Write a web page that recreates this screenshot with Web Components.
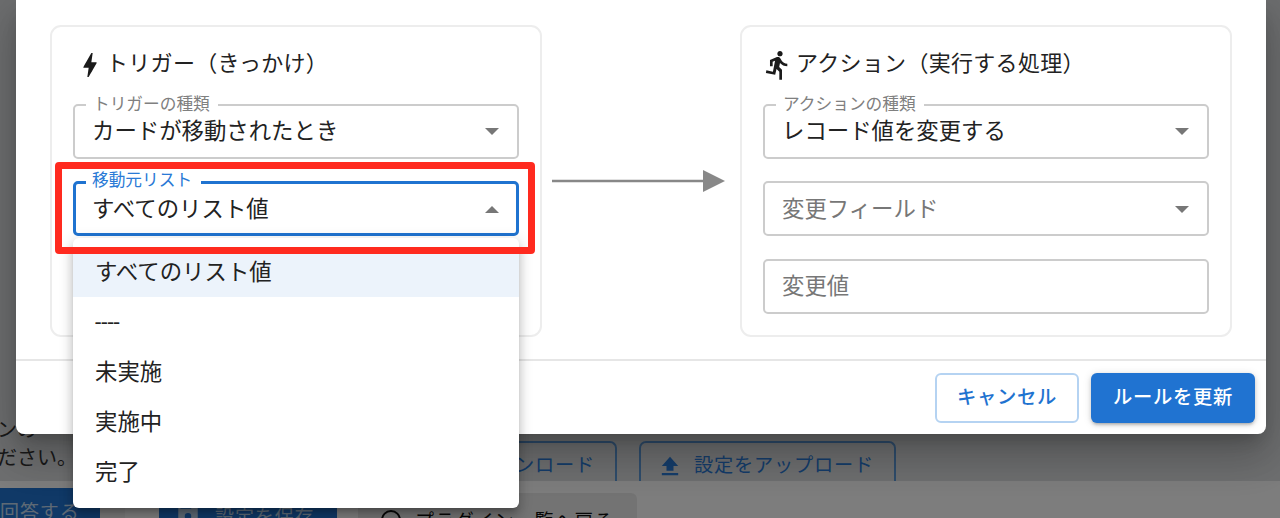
<!DOCTYPE html>
<html lang="ja"><head><meta charset="utf-8"><title>Rule</title>
<style>
html,body{margin:0;padding:0;width:1280px;height:518px;overflow:hidden;background:#fff}
body{font-family:Roboto,"Noto Sans CJK JP",sans-serif;position:relative}
</style></head><body>
<x-background></x-background>
<x-scrim>
  <x-dialog>
    <x-card slot="left" heading="トリガー（きっかけ）" icon="bolt">
      <x-select label="トリガーの種類" value="カードが移動されたとき"></x-select>
      <x-select label="移動元リスト" value="すべてのリスト値" focused></x-select>
    </x-card>
    <x-arrow slot="mid"></x-arrow>
    <x-card slot="right" heading="アクション（実行する処理）" icon="run">
      <x-select label="アクションの種類" value="レコード値を変更する"></x-select>
      <x-select placeholder="変更フィールド"></x-select>
      <x-select placeholder="変更値" plain></x-select>
    </x-card>
    <x-button slot="actions" variant="outlined">キャンセル</x-button>
    <x-button slot="actions" variant="contained">ルールを更新</x-button>
  </x-dialog>
</x-scrim>
<x-menu>
  <x-menu-item selected>すべてのリスト値</x-menu-item>
  <x-menu-item dash>----</x-menu-item>
  <x-menu-item>未実施</x-menu-item>
  <x-menu-item>実施中</x-menu-item>
  <x-menu-item>完了</x-menu-item>
</x-menu>
<x-highlight></x-highlight>
<script>
function def(name,html,cls){
  const t=document.createElement('template');t.innerHTML=html;
  customElements.define(name,class extends HTMLElement{
    constructor(){super();this.attachShadow({mode:'open'}).appendChild(t.content.cloneNode(true));}
    connectedCallback(){if(cls)cls.call(this,this.shadowRoot);}
  });
}
const ICONS={
 bolt:'<svg viewBox="0 0 24 24" width="32" height="32"><path d="M11 21h-1l1-7H7.5c-.88 0-.33-.75-.31-.78C8.48 10.94 10.42 7.54 13.01 3h1l-1 7h3.51c.4 0 .62.19.4.66C12.97 17.55 11 21 11 21z" fill="#1a1a1a"/></svg>',
 run:'<svg viewBox="0 0 24 24" width="32" height="32" style="margin-left:-3px"><path d="M13.49 5.48c1.1 0 2-.9 2-2s-.9-2-2-2-2 .9-2 2 .9 2 2 2zm-3.6 13.9 1-4.4 2.1 2v6h2v-7.5l-2.1-2 .6-3c1.3 1.5 3.3 2.5 5.5 2.5v-2c-1.9 0-3.5-1-4.3-2.4l-1-1.6c-.4-.6-1-1-1.7-1-.3 0-.5.1-.8.1l-5.2 2.2v4.7h2v-3.4l1.8-.7-1.6 8.1-4.9-1-.4 2 7 1.4z" fill="#1a1a1a"/></svg>'
};
const UP='<svg width="28" height="28" viewBox="0 0 24 24"><path d="M5 20h14v-2H5v2zm7-16-7 8h4v4h6v-4h4l-7-8z" fill="#2a7ad6"/></svg>';
def('x-background',`<style>
:host{display:block;width:1280px;height:518px;background:#dcdee0;overflow:hidden}
.top{height:481px;box-sizing:border-box;position:relative;display:flex;align-items:flex-end;padding-left:360px;gap:22px}
.note{flex:none;position:absolute;left:-3px;top:416px;font-size:20px;line-height:28px;color:#333}
.ol{flex:none;box-sizing:border-box;height:40px;border:2px solid #5f9ad8;border-bottom:0;border-radius:7px 7px 0 0;color:#2a7ad6;font-size:19.2px;letter-spacing:.8px;display:flex;align-items:flex-start;padding:8px 10px 0 15px;gap:10px;line-height:30px;width:257px;white-space:nowrap}
.ol svg{flex:none;margin-top:1px}
.bot{height:37px;background:#fbfbfb;display:flex;align-items:flex-start;position:relative}
.b{flex:none;height:40px;box-sizing:border-box;font-size:19px;letter-spacing:.9px;white-space:nowrap;display:flex;gap:14px;line-height:28px;padding-top:11px}
.a{margin-top:7px;width:100px;background:#2173cf;color:#bcd3ea;border-radius:0 6px 0 0;padding-left:0}
.gap{flex:none;width:25px;height:37px;background:#f0f0f0}
.s{margin:7px 0 0 34px;width:178px;background:#2173cf;color:#bcd3ea;padding:16px 0 0 16px;border-radius:6px 6px 0 0}
.s svg{flex:none;margin-top:-5px}
.p{margin:12px 0 0 21px;width:279px;background:#e7e7e7;color:#111;padding:16px 0 0 21px;border-radius:6px 6px 0 0;gap:12px;line-height:26px}
.p svg{flex:none;margin-top:-1px}
</style>
<div class="top">
<div class="note">ンの<br>ださい。</div>
<div class="ol">${UP}設定をダウンロード</div>
<div class="ol">${UP}設定をアップロード</div>
</div>
<div class="bot">
<div class="b a">回答する</div>
<div class="gap"></div>
<div class="b s"><svg width="26" height="26" viewBox="0 0 24 24"><path d="M17 3H5a2 2 0 0 0-2 2v14a2 2 0 0 0 2 2h14a2 2 0 0 0 2-2V7l-4-4zm-5 16a3 3 0 1 1 0-6 3 3 0 0 1 0 6zm3-10H5V5h10v4z" fill="#bcd3ea"/></svg>設定を保存</div>
<div class="b p"><svg width="24" height="24" viewBox="0 0 24 24"><circle cx="12" cy="12" r="9" fill="none" stroke="#111" stroke-width="2"/></svg>プラグイン一覧へ戻る</div>
</div>`);
def('x-scrim',`<style>
:host{display:block;position:absolute;inset:0;background:rgba(0,0,0,.5);padding:0 14px 0 16px;box-sizing:border-box}
</style><slot></slot>`);
def('x-dialog',`<style>
:host{display:block;background:#fff;height:434px;border-radius:0 0 8px 8px;box-shadow:0 11px 16px -7px rgba(0,0,0,.2),0 24px 38px 3px rgba(0,0,0,.14),0 9px 46px 8px rgba(0,0,0,.12)}
.body{height:361px;box-sizing:border-box;padding:25px 34px 0;display:flex;align-items:flex-start;border-bottom:2px solid #e6e6e6}
.mid{flex:1;height:312px;display:flex;align-items:center;justify-content:center}
.foot{display:flex;justify-content:flex-end;gap:12px;padding:12px 11px 0 0}
</style><div class="body"><slot name="left"></slot><div class="mid"><slot name="mid"></slot></div><slot name="right"></slot></div>
<div class="foot"><slot name="actions"></slot></div>`);
def('x-card',`<style>
:host{display:block;width:492px;height:312px;box-sizing:border-box;border:2px solid #ededed;border-radius:11px;padding:0 21px;flex:none}
h2{margin:0;height:76.5px;box-sizing:border-box;padding-bottom:9px;display:flex;align-items:center;font-weight:400;font-size:22px;letter-spacing:.3px;color:#222;text-spacing-trim:space-all}
.i{display:flex;width:33px;justify-content:center;flex:none;margin-top:8px}
.f{display:flex;flex-direction:column;gap:22.5px}
</style><h2><span class="i"></span><span class="t"></span></h2><div class="f"><slot></slot></div>`,function(r){
  r.querySelector('.t').textContent=this.getAttribute('heading');
  r.querySelector('.i').innerHTML=ICONS[this.getAttribute('icon')];
});
def('x-select',`<style>
:host{display:block}
.box{position:relative;height:55px;box-sizing:border-box;border:2px solid #cccccc;border-radius:5px;display:flex;align-items:center;padding:0 17px 4px;font-size:22.4px;color:#222}
.box.foc{border:3px solid #1f73d0;padding:0 16px 4px}
.ph{color:#777}
.lab{position:absolute;left:11px;top:-11px;font-size:16.7px;line-height:20px;padding:0 8px 0 7px;color:#808080;background:#fff;white-space:nowrap}
.foc .lab{color:#2a7ad6;left:10px;top:-13px;padding:0 9px 0 6px}
.caret{position:absolute;right:18px;top:50%;margin-top:-3px;width:0;height:0;border:7px solid transparent;border-top:7px solid #777;border-bottom:0}
.foc .caret{border-top:0;border-bottom:7px solid #777;right:17px}
</style><div class="box"><span class="lab"></span><span class="v"></span><span class="caret"></span></div>`,function(r){
  const box=r.querySelector('.box'),lab=r.querySelector('.lab'),v=r.querySelector('.v');
  if(this.hasAttribute('focused'))box.classList.add('foc');
  if(this.getAttribute('label'))lab.textContent=this.getAttribute('label');else lab.remove();
  if(this.getAttribute('value'))v.textContent=this.getAttribute('value');
  else{v.textContent=this.getAttribute('placeholder');v.className='v ph';}
  if(this.hasAttribute('plain'))r.querySelector('.caret').remove();
});
def('x-arrow',`<style>
:host{display:block;margin-left:-5px;line-height:0}
</style><svg width="173" height="24" viewBox="0 0 173 24"><path d="M0 12h152" stroke="#888" stroke-width="2.5"/><path d="M151 1l22 11-22 11z" fill="#888"/></svg>`);
def('x-button',`<style>
:host{box-sizing:border-box;height:50px;border-radius:6px;font-size:19.3px;font-weight:500;letter-spacing:.7px;display:flex;align-items:center;justify-content:center;padding-bottom:4px}
:host([variant=outlined]){width:144px;border:2px solid #b5d3f2;color:#1f73d0}
:host([variant=contained]){width:164px;background:#2073d1;color:#fff;box-shadow:0 3px 3px -2px rgba(0,0,0,.2),0 2px 4px rgba(0,0,0,.14),0 1px 8px rgba(0,0,0,.12)}
</style><slot></slot>`);
def('x-menu',`<style>
:host{display:block;position:absolute;left:73px;top:238px;width:446px;height:270px;box-sizing:border-box;padding:9px 0 11px;background:#fff;border-radius:6px;box-shadow:0 5px 5px -3px rgba(0,0,0,.2),0 8px 10px 1px rgba(0,0,0,.14),0 3px 14px 2px rgba(0,0,0,.12)}
</style><slot></slot>`);
def('x-menu-item',`<style>
:host{display:flex;align-items:center;height:50px;box-sizing:border-box;padding:0 0 4px 22px;font-size:22.4px;color:#222}
:host([selected]){background:#ecf3fb}
:host([dash]){padding-bottom:0}
</style><slot></slot>`);
def('x-highlight',`<style>
:host{display:block;position:absolute;left:55px;top:162px;width:480px;height:92px;box-sizing:border-box;border:7px solid #ff2a1f;border-radius:4px;pointer-events:none}
</style>`);
</script>
</body></html>
